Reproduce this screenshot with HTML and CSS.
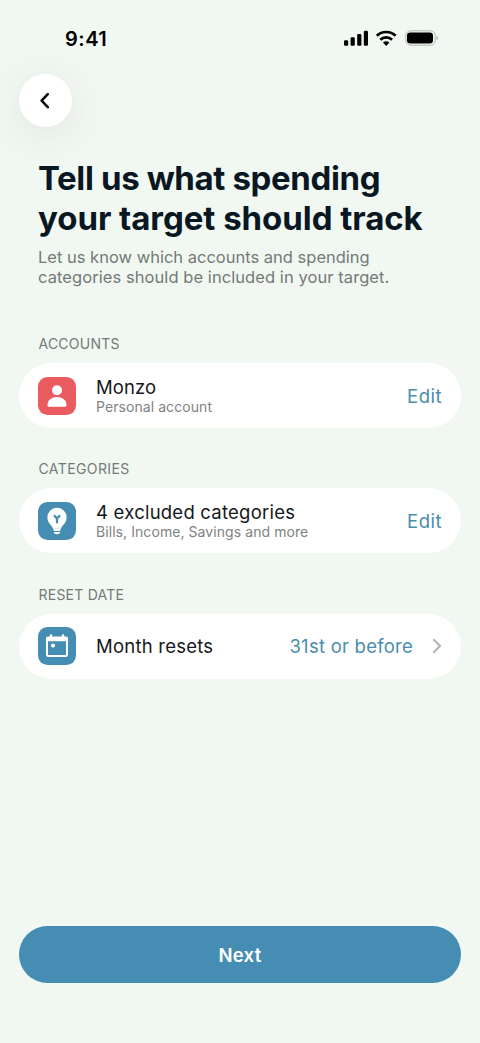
FILE: index.html
```html
<!DOCTYPE html>
<html lang="en">
<head>
<meta charset="utf-8">
<meta name="viewport" content="width=device-width, initial-scale=1">
<title>Target spending</title>
<link rel="stylesheet" href="styles.css">
</head>
<body>
<main class="screen">
  <div class="status">
    <span class="time">9:41</span>
    <svg class="status-icons" viewBox="0 0 96 18" width="96" height="18" aria-hidden="true">
      <rect x="0" y="11.200" width="4.200" height="5.500" rx="1.200"/>
      <rect x="6.600" y="8.200" width="4.200" height="8.500" rx="1.200"/>
      <rect x="13.200" y="5" width="4.200" height="11.700" rx="1.200"/>
      <rect x="19.800" y="1.700" width="4.200" height="15" rx="1.200"/>
      <g fill="none" stroke="#000" stroke-width="2.700">
        <path d="M32.800 6.800a13.500 13.500 0 0 1 18.800 0"/>
        <path d="M36.300 10.700a8.500 8.500 0 0 1 11.800 0"/>
      </g>
      <path d="M42.200 17l-3.200-3.400a4.800 4.800 0 0 1 6.400 0z"/>
      <rect x="61.800" y="1.800" width="29.400" height="14.400" rx="4.800" fill="none" stroke="#b0b5b0"/>
      <rect x="63" y="3.500" width="26" height="11" rx="3.200"/>
      <path d="M92.600 7a2.200 2.200 0 0 1 0 4z" fill="#9da19d"/>
    </svg>
  </div>
  <button class="back" aria-label="Back">
    <svg viewBox="0 0 12 18" width="12" height="18"><path d="M8.800 2.200L2.600 8.700L8.800 15.200" fill="none" stroke="#0b0f14" stroke-width="2.600" stroke-linecap="round" stroke-linejoin="round"/></svg>
  </button>
  <header class="intro">
    <h1><span class="t1">Tell us what spending</span><br><span class="t2">your target should track</span></h1>
    <p><span class="p1">Let us know which accounts and spending</span><br><span class="p2">categories should be included in your target.</span></p>
  </header>
  <section class="group">
    <h2 class="g1">ACCOUNTS</h2>
    <div class="card">
      <svg class="icon" viewBox="0 0 38 38"><rect width="38" height="38" rx="9.500" fill="#e95b5e"/><circle cx="19" cy="13.200" r="5" fill="#fff"/><path d="M9.500 28.200c0-5.200 4.300-8.200 9.500-8.200s9.500 3 9.500 8.200c0 1-.6 1.600-1.600 1.600H11.100c-1 0-1.600-.6-1.600-1.600z" fill="#fff"/></svg>
      <div class="labels"><span class="name n1">Monzo</span><span class="detail">Personal account</span></div>
      <a class="action">Edit</a>
    </div>
  </section>
  <section class="group">
    <h2 class="g2">CATEGORIES</h2>
    <div class="card">
      <svg class="icon" viewBox="0 0 38 38"><rect width="38" height="38" rx="9.500" fill="#468db3"/><path d="M14.900 26.800c0-3-5.500-5.400-5.500-11.400a9.600 9.600 0 0 1 19.200 0c0 6-5.500 8.400-5.500 11.400z" fill="#fff"/><path d="M16 13.300l3 3.300 3-3.300M19 16.600v4.600" fill="none" stroke="#468db3" stroke-width="2.200"/><path d="M15.500 26.700h7v1.400a.8.8 0 0 1-.8.8h-5.400a.8.8 0 0 1-.8-.8zM15.800 30h6.400c0 1.400-1 2.200-3.200 2.200s-3.200-.8-3.200-2.200z" fill="#fff"/></svg>
      <div class="labels"><span class="name n2">4 excluded categories</span><span class="detail">Bills, Income, Savings and more</span></div>
      <a class="action">Edit</a>
    </div>
  </section>
  <section class="group">
    <h2 class="g3">RESET DATE</h2>
    <div class="card">
      <svg class="icon" viewBox="0 0 38 38"><rect width="38" height="38" rx="9.500" fill="#468db3"/><rect x="9" y="11" width="20" height="18" rx="1.200" fill="none" stroke="#fff" stroke-width="2"/><path d="M8 14.200v-2.700a2 2 0 0 1 2-2h18a2 2 0 0 1 2 2v2.700z" fill="#fff"/><path d="M13 8.500v3M25 8.500v3" stroke="#fff" stroke-width="2.400" stroke-linecap="round"/><rect x="13.100" y="16.800" width="3.800" height="3.600" rx="1.400" fill="#fff"/></svg>
      <div class="labels"><span class="name n3">Month resets</span></div>
      <a class="action value">31st or before</a>
      <svg class="chevron" viewBox="0 0 10 16" width="10" height="16"><path d="M1.300 1.300L8 8L1.300 14.700" fill="none" stroke="#b8b8b8" stroke-width="2.300"/></svg>
    </div>
  </section>
  <button class="next">Next</button>
</main>
</body>
</html>
```
FILE: styles.css
```css
* { box-sizing: border-box; }
body { margin: 0; background: #f1f8f2; font-family: Inter, "Liberation Sans", sans-serif; }
button { border: 0; padding: 0; font-family: inherit; }
.screen { height: 1043px; padding: 0 19px 60px; display: flex; flex-direction: column; }
.status { height: 74px; padding: 29px 22px 0 46px; display: flex; justify-content: space-between; align-items: flex-start; color: #000; }
.time { font-size: 20px; line-height: 20px; font-weight: 600; letter-spacing: .5px; }
.status-icons { margin-right: -1px; }
.back { width: 53px; height: 53px; flex: none; border-radius: 50%; background: #fff; display: flex; align-items: center; justify-content: center; box-shadow: 0 8px 40px rgba(0, 0, 0, .08); }
.back svg { margin-right: 1px; }
.intro { padding: 32px 0 0 19px; height: 207px; white-space: nowrap; }
h1 { margin: 0; font-size: 33px; line-height: 39.5px; font-weight: 700; color: #091723; }
.t1 { letter-spacing: -.37px; }
.t2 { letter-spacing: -.05px; }
.intro p { margin: 10px 0 0; font-size: 16.5px; line-height: 19.5px; color: #747a76; }
.p2 { letter-spacing: .07px; }
.group { height: 125.3px; flex: none; }
.group h2 { margin: 0 0 0 19.5px; height: 29px; font-size: 14px; line-height: 19px; font-weight: 400; color: #747a76; letter-spacing: .23px; }
.group .g2 { letter-spacing: .4px; }
.card { height: 65px; border-radius: 33px; background: #fff; display: flex; align-items: center; padding: 0 19px; }
.icon { width: 38px; height: 38px; flex: none; }
.labels { margin-left: 20px; flex: 1; display: flex; flex-direction: column; white-space: nowrap; }
.name { font-size: 18.5px; line-height: 22px; color: #15181b; letter-spacing: .23px; }
.n1 { letter-spacing: .05px; }
.detail { font-size: 14px; line-height: 18px; color: #7f8381; letter-spacing: .07px; }
.action { font-size: 18.5px; color: #4a8cac; white-space: nowrap; letter-spacing: .5px; }
.value { letter-spacing: .24px; }
.chevron { margin-left: 19px; }
.next { margin-top: auto; height: 57px; flex: none; border-radius: 29px; background: #468db3; color: #fff; font-size: 18.5px; font-weight: 600; letter-spacing: .3px; }
```
